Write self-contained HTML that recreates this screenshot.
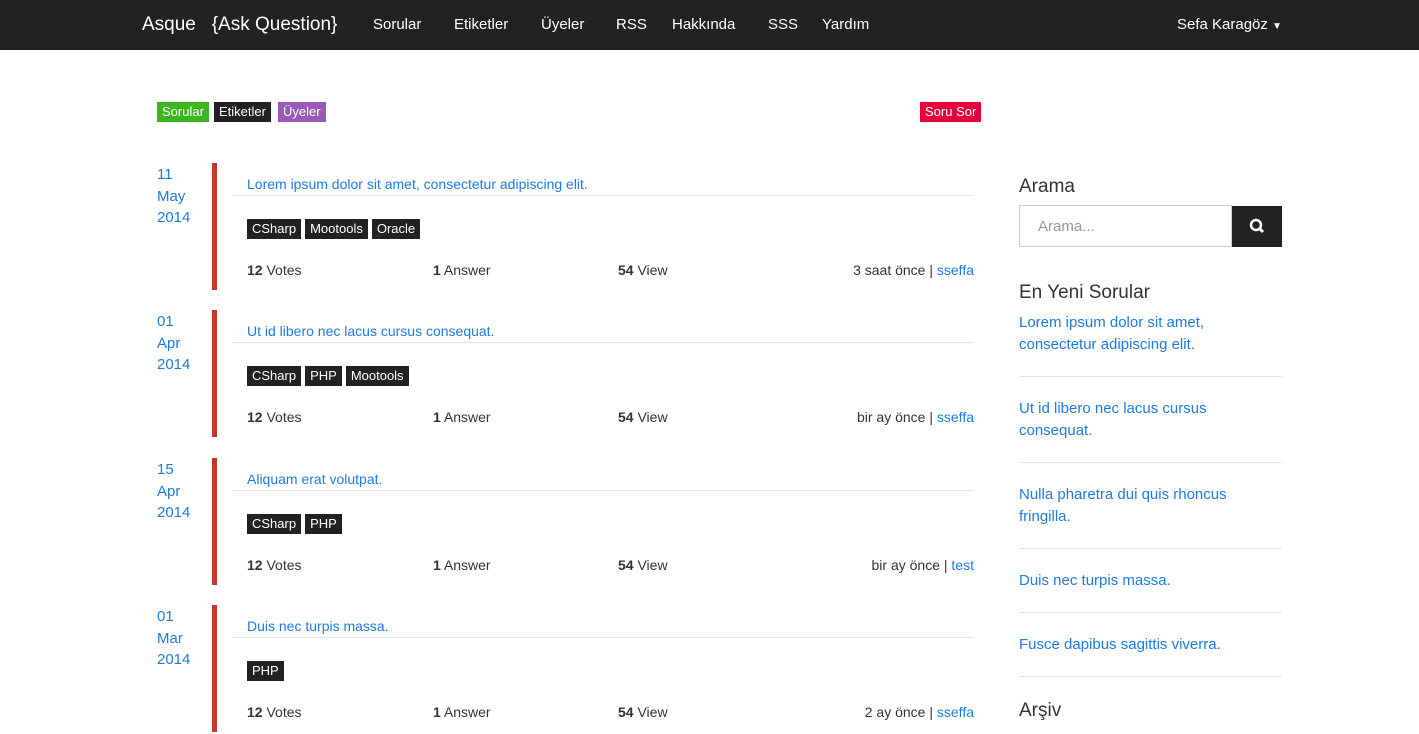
<!DOCTYPE html><html><head><meta charset="utf-8"><style>
*{margin:0;padding:0;box-sizing:border-box}
body{width:1419px;height:734px;overflow:hidden;font-family:"Liberation Sans",sans-serif;font-size:14px;color:#333;background:#fff;position:relative}
.nav{position:absolute;left:0;top:0;width:1419px;height:50px;background:#222}
.nav span{position:absolute;top:16px;color:#fff;font-size:15px}
.a{position:absolute}
.blue{color:#1e7be0}
.lbl{position:absolute;top:102px;height:20px;color:#fff;font-size:13px;padding:2px 5px;line-height:16px}
.item{position:absolute;left:0;width:1000px;height:127px}
.date{position:absolute;left:157px;top:1px;color:#1e7be0;font-size:15px;line-height:21.5px}
.bar{position:absolute;left:212px;top:0;width:5px;height:127px;background:#c0392b}
.title{position:absolute;left:247px;top:13px;color:#1e7be0;font-size:14px}
.hr{position:absolute;left:232px;top:32px;width:742px;height:1px;background:#e5e5e5}
.tags{position:absolute;left:247px;top:56px}
.tags b{display:inline-block;background:#222;color:#fff;font-weight:normal;font-size:13px;padding:2px 5px;line-height:16px;margin-right:4px}
.st{position:absolute;top:99px;font-size:14px}
.side{position:absolute;left:1019px;width:263px}
.sq a{display:block;color:#1e7be0;font-size:15px;line-height:22px;border-bottom:1px solid #e5e5e5}
</style></head><body>
<div class="nav">
<span style="left:142px;top:14px;font-size:19px">Asque&nbsp;&nbsp;&nbsp;{Ask Question}</span>
<span style="left:373px">Sorular</span><span style="left:454px">Etiketler</span><span style="left:541px">Üyeler</span><span style="left:616px">RSS</span><span style="left:672px">Hakkında</span><span style="left:768px">SSS</span><span style="left:822px">Yardım</span>
<span style="left:1177px">Sefa Karagöz <span style="position:static;font-size:10px">▼</span></span>
</div>
<div class="lbl" style="left:157px;background:#3cb521">Sorular</div>
<div class="lbl" style="left:214px;background:#222">Etiketler</div>
<div class="lbl" style="left:278px;background:#9b59b6">Üyeler</div>
<div class="lbl" style="left:920px;background:#e6003e">Soru Sor</div>

<div class="item" style="top:163px"><div class="date">11<br>May<br>2014</div><div class="bar"></div><div class="title">Lorem ipsum dolor sit amet, consectetur adipiscing elit.</div><div class="hr"></div><div class="tags"><b>CSharp</b><b>Mootools</b><b>Oracle</b></div><div class="st" style="left:247px"><b>12</b> Votes</div><div class="st" style="left:433px"><b>1</b> Answer</div><div class="st" style="left:618px"><b>54</b> View</div><div class="st" style="right:26px">3 saat önce | <span class="blue">sseffa</span></div></div>

<div class="item" style="top:310px"><div class="date">01<br>Apr<br>2014</div><div class="bar"></div><div class="title">Ut id libero nec lacus cursus consequat.</div><div class="hr"></div><div class="tags"><b>CSharp</b><b>PHP</b><b>Mootools</b></div><div class="st" style="left:247px"><b>12</b> Votes</div><div class="st" style="left:433px"><b>1</b> Answer</div><div class="st" style="left:618px"><b>54</b> View</div><div class="st" style="right:26px">bir ay önce | <span class="blue">sseffa</span></div></div>

<div class="item" style="top:458px"><div class="date">15<br>Apr<br>2014</div><div class="bar"></div><div class="title">Aliquam erat volutpat.</div><div class="hr"></div><div class="tags"><b>CSharp</b><b>PHP</b></div><div class="st" style="left:247px"><b>12</b> Votes</div><div class="st" style="left:433px"><b>1</b> Answer</div><div class="st" style="left:618px"><b>54</b> View</div><div class="st" style="right:26px">bir ay önce | <span class="blue">test</span></div></div>

<div class="item" style="top:605px"><div class="date">01<br>Mar<br>2014</div><div class="bar"></div><div class="title">Duis nec turpis massa.</div><div class="hr"></div><div class="tags"><b>PHP</b></div><div class="st" style="left:247px"><b>12</b> Votes</div><div class="st" style="left:433px"><b>1</b> Answer</div><div class="st" style="left:618px"><b>54</b> View</div><div class="st" style="right:26px">2 ay önce | <span class="blue">sseffa</span></div></div>

<div class="side" style="top:176px;font-size:19px">Arama</div>
<div class="side" style="top:205px;height:42px;border:1px solid #ccc;width:213px;padding:12px 18px;color:#999;font-size:15px">Arama...</div>
<div class="a" style="left:1232px;top:206px;width:50px;height:41px;background:#222"><svg width="50" height="41"><circle cx="24" cy="19" r="5" stroke="#fff" stroke-width="2.5" fill="none"/><line x1="27.5" y1="22.5" x2="31" y2="26" stroke="#fff" stroke-width="3"/></svg></div>
<div class="side" style="top:282px;font-size:19px">En Yeni Sorular</div>
<div class="side sq" style="top:312px">
<a style="padding-bottom:20px">Lorem ipsum dolor sit amet, consectetur adipiscing elit.</a>
<a style="padding:21px 0 20px">Ut id libero nec lacus cursus consequat.</a>
<a style="padding:21px 0 20px">Nulla pharetra dui quis rhoncus fringilla.</a>
<a style="padding:21px 0 20px">Duis nec turpis massa.</a>
<a style="padding:21px 0 20px">Fusce dapibus sagittis viverra.</a>
</div>
<div class="side" style="top:700px;font-size:19px">Arşiv</div>
</body></html>
